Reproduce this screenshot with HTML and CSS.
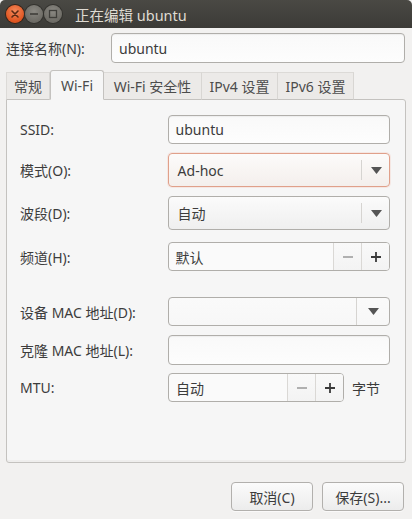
FILE: index.html
```html
<!DOCTYPE html>
<html lang="zh-CN">
<head>
<meta charset="utf-8">
<title>正在编辑 ubuntu</title>
<link rel="stylesheet" href="styles.css">
</head>
<body>
<div class="window">
  <div class="titlebar">
    <div class="wbtns">
      <span class="wbtn close"><svg width="18" height="18" viewBox="0 0 18 18"><path d="M6 6 L12 12 M12 6 L6 12" stroke="#5a2a14" stroke-width="1.6" stroke-linecap="round"/></svg></span>
      <span class="wbtn gray"><svg width="18" height="18" viewBox="0 0 18 18"><path d="M5 9 H13" stroke="#3f3e3a" stroke-width="1.6"/></svg></span>
      <span class="wbtn gray"><svg width="18" height="18" viewBox="0 0 18 18"><rect x="5.5" y="5.5" width="7" height="7" fill="none" stroke="#3f3e3a" stroke-width="1.3"/></svg></span>
    </div>
    <div class="title">正在编辑 ubuntu</div>
  </div>

  <div class="namerow">
    <label class="lbl">连接名称(N):</label>
    <div class="entry wide">ubuntu</div>
  </div>

  <div class="tabs">
    <div class="tab first">常规</div>
    <div class="tab active">Wi-Fi</div>
    <div class="tab t3">Wi-Fi 安全性</div>
    <div class="tab t4">IPv4 设置</div>
    <div class="tab t5">IPv6 设置</div>
  </div>

  <div class="panel">
    <div class="row r-ssid">
      <span class="lbl">SSID:</span>
      <div class="entry ctl">ubuntu</div>
    </div>
    <div class="row r-mode">
      <span class="lbl">模式(O):</span>
      <div class="combo ctl focus"><span class="ctext">Ad-hoc</span><span class="arrow"><svg width="11" height="7" viewBox="0 0 11 7"><path d="M0 0 H11 L5.5 7 Z" fill="#555"/></svg></span></div>
    </div>
    <div class="row r-band">
      <span class="lbl">波段(D):</span>
      <div class="combo ctl"><span class="ctext">自动</span><span class="arrow"><svg width="11" height="7" viewBox="0 0 11 7"><path d="M0 0 H11 L5.5 7 Z" fill="#555"/></svg></span></div>
    </div>
    <div class="row r-chan">
      <span class="lbl">频道(H):</span>
      <div class="spin ctl"><span class="stext">默认</span><span class="sbtn minus"><svg width="12" height="12" viewBox="0 0 12 12"><path d="M1 6 H11" stroke="#a9a9a9" stroke-width="1.8"/></svg></span><span class="sbtn plus"><svg width="12" height="12" viewBox="0 0 12 12"><path d="M1 6 H11 M6 1 V11" stroke="#3a3a3a" stroke-width="1.8"/></svg></span></div>
    </div>
    <div class="row r-dmac">
      <span class="lbl">设备 MAC 地址(D):</span>
      <div class="combo entrycombo ctl"><span class="ctext"></span><span class="arrow narrow"><svg width="11" height="7" viewBox="0 0 11 7"><path d="M0 0 H11 L5.5 7 Z" fill="#555"/></svg></span></div>
    </div>
    <div class="row r-cmac">
      <span class="lbl">克隆 MAC 地址(L):</span>
      <div class="entry ctl"></div>
    </div>
    <div class="row r-mtu">
      <span class="lbl">MTU:</span>
      <div class="spin mtu"><span class="stext">自动</span><span class="sbtn minus"><svg width="12" height="12" viewBox="0 0 12 12"><path d="M1 6 H11" stroke="#a9a9a9" stroke-width="1.8"/></svg></span><span class="sbtn plus"><svg width="12" height="12" viewBox="0 0 12 12"><path d="M1 6 H11 M6 1 V11" stroke="#3a3a3a" stroke-width="1.8"/></svg></span></div>
      <span class="unit">字节</span>
    </div>
  </div>

  <div class="actions">
    <button class="btn">取消(C)</button>
    <button class="btn">保存(S)...</button>
  </div>
</div>
</body>
</html>
```

FILE: styles.css
```css
* { box-sizing: border-box; }
html, body { margin: 0; padding: 0; }
body {
  width: 412px;
  height: 519px;
  overflow: hidden;
  background: #f2f1f0;
  font-family: "Noto Sans", "Noto Sans CJK SC", sans-serif;
  font-size: 14px;
  color: #3c3c3c;
}
.window { width: 412px; height: 519px; display: flex; flex-direction: column; }

.titlebar {
  height: 28px;
  flex: none;
  display: flex;
  align-items: center;
  background: linear-gradient(#4a4944, #3c3b37);
  border-radius: 5px 5px 0 0;
  padding-left: 6px;
}
.wbtns { display: flex; gap: 1px; }
.wbtn {
  width: 18px; height: 18px; border-radius: 50%;
  display: flex; align-items: center; justify-content: center;
}
.wbtn.close { background: radial-gradient(circle at 50% 35%, #f58a5c, #e0541f 70%); box-shadow: 0 0 0 1px #3a2418; }
.wbtn.gray { background: radial-gradient(circle at 50% 35%, #8a8882, #6d6b65 70%); box-shadow: 0 0 0 1px #33322e; }
.title { color: #dfdbd2; margin-left: 13px; font-size: 14.5px; }

.namerow {
  display: flex; align-items: center;
  padding: 5px 7px 0 6px;
  height: 35px;
  flex: none;
}
.namerow .lbl { width: 105px; }
.entry {
  height: 30px;
  border: 1px solid #b0aeaa;
  border-radius: 4px;
  background: linear-gradient(#f9f9f9, #fdfdfd);
  box-shadow: inset 0 1px 1px rgba(0,0,0,0.05);
  display: flex; align-items: center;
  padding-left: 7px;
  color: #3c3c3c;
}
.entry.wide { flex: 1; }

.tabs {
  display: flex;
  margin: 8px 0 0 6px;
  height: 29px;
  align-items: flex-end;
  position: relative;
  z-index: 1;
  flex: none;
}
.tab {
  flex: none;
  white-space: nowrap;
  height: 28px;
  padding: 0;
  display: flex; align-items: center; justify-content: center;
  background: #eceae8;
  border-top: 1px solid #dcdad7;
  border-right: 1px solid #d8d6d3;
  border-bottom: 1px solid #c4c2bf;
  color: #4c4c4c;
}
.tab.first { border-left: 1px solid #dcdad7; width: 44px; }
.tab.active {
  height: 30px;
  background: #f6f6f6;
  border: 1px solid #c4c2bf;
  border-bottom: 1px solid #f6f6f6;
  border-radius: 3px 3px 0 0;
  width: 54px;
}
.tab.t3 { width: 98px; }
.tab.t4 { width: 76px; }
.tab.t5 { width: 76px; }

.panel {
  margin: -1px 6px 0 6px;
  height: 364px;
  flex: none;
  border: 1px solid #c4c2bf;
  border-radius: 0 3px 3px 3px;
  background: #f6f6f6;
  box-shadow: inset 0 -2px 0 #efeeed;
  padding: 15px 15px 0 13px;
  display: flex; flex-direction: column;
}
.row { display: flex; align-items: center; flex: none; }
.row .lbl { width: 148px; }
.ctl { width: 223px; }
.r-ssid { height: 29px; }
.r-ssid .entry { height: 29px; }
.r-mode { margin-top: 9px; height: 34px; }
.r-band { margin-top: 9px; height: 34px; }
.r-chan { margin-top: 12px; height: 29px; }
.r-dmac { margin-top: 26px; height: 29px; }
.r-cmac { margin-top: 9px; height: 30px; }
.r-mtu { margin-top: 8px; height: 29px; }

.combo {
  height: 100%;
  border: 1px solid #b0aeaa;
  border-radius: 4px;
  background: linear-gradient(#fbfbfb, #efefef);
  display: flex; align-items: center;
}
.combo.focus { border-color: #e0a08a; box-shadow: 0 0 0 1px rgba(240,150,120,0.15); background: linear-gradient(#fcfbfa, #f4efec); }
.combo .ctext { flex: 1; padding-left: 9px; }
.combo .arrow {
  width: 28px; height: 20px;
  border-left: 1px solid #d6d4d1;
  display: flex; align-items: center; justify-content: center;
  padding-left: 1px;
}
.combo .arrow.narrow { width: 33px; height: 100%; }
.entrycombo { background: linear-gradient(#fafafa, #f7f7f7); }

.spin {
  height: 100%;
  border: 1px solid #b0aeaa;
  border-radius: 4px;
  background: #fafafa;
  display: flex; align-items: stretch;
}
.spin .stext { flex: 1; display: flex; align-items: center; padding-left: 7px; }
.spin .sbtn {
  width: 28px;
  border-left: 1px solid #dad8d5;
  display: flex; align-items: center; justify-content: center;
  background: linear-gradient(#f9f9f9, #f3f3f3);
}
.spin .sbtn.plus { border-radius: 0 3px 3px 0; }
.spin.mtu { width: 176px; }
.unit { margin-left: 8px; }

.actions {
  display: flex; justify-content: flex-end;
  gap: 9px;
  padding: 19px 8px 0 0;
}
.btn {
  width: 82px; height: 29px;
  font: inherit;
  color: #3c3c3c;
  border: 1px solid #b2b0ad;
  border-radius: 4px;
  background: linear-gradient(#fbfbfb, #ececec);
  box-shadow: 0 1px 0 rgba(255,255,255,0.6);
  padding: 0;
}
```
